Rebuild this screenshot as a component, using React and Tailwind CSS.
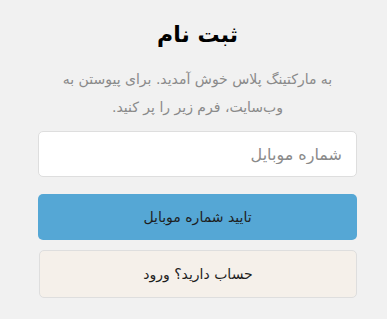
export default function App() {
  return (
    <div
      dir="rtl"
      className="min-h-[319px] bg-[#f1f1f1] pl-[38px] pr-[30px] pt-[20px]"
      style={{ fontFamily: '"DejaVu Sans", "Noto Sans", sans-serif' }}
    >
      <div className="flex flex-col">
        <h1 className="text-center text-[22px] font-bold leading-[30px] text-black">ثبت نام</h1>
        <p className="mt-[15px] text-center text-[14px] leading-[28px] text-[#8a8a8a]">
          به مارکتینگ پلاس خوش آمدید. برای پیوستن به وب‌سایت، فرم زیر را پر کنید.
        </p>
        <input
          type="text"
          placeholder="شماره موبایل"
          className="mt-[10px] h-[46px] rounded-[5px] border border-[#dedede] bg-white px-[14px] text-[16px] text-[#333] outline-none placeholder:text-[#8a8a8a]"
        />
        <button className="mt-[17px] h-[46px] rounded-[5px] bg-[#55a7d5] text-[14px] text-[#1e1e1e]">
          تایید شماره موبایل
        </button>
        <button className="mt-[10px] ml-[1px] h-[48px] rounded-[5px] border border-[#dedede] bg-[#f5f0ea] text-[14px] text-[#1e1e1e]">
          حساب دارید؟ ورود
        </button>
      </div>
    </div>
  );
}
